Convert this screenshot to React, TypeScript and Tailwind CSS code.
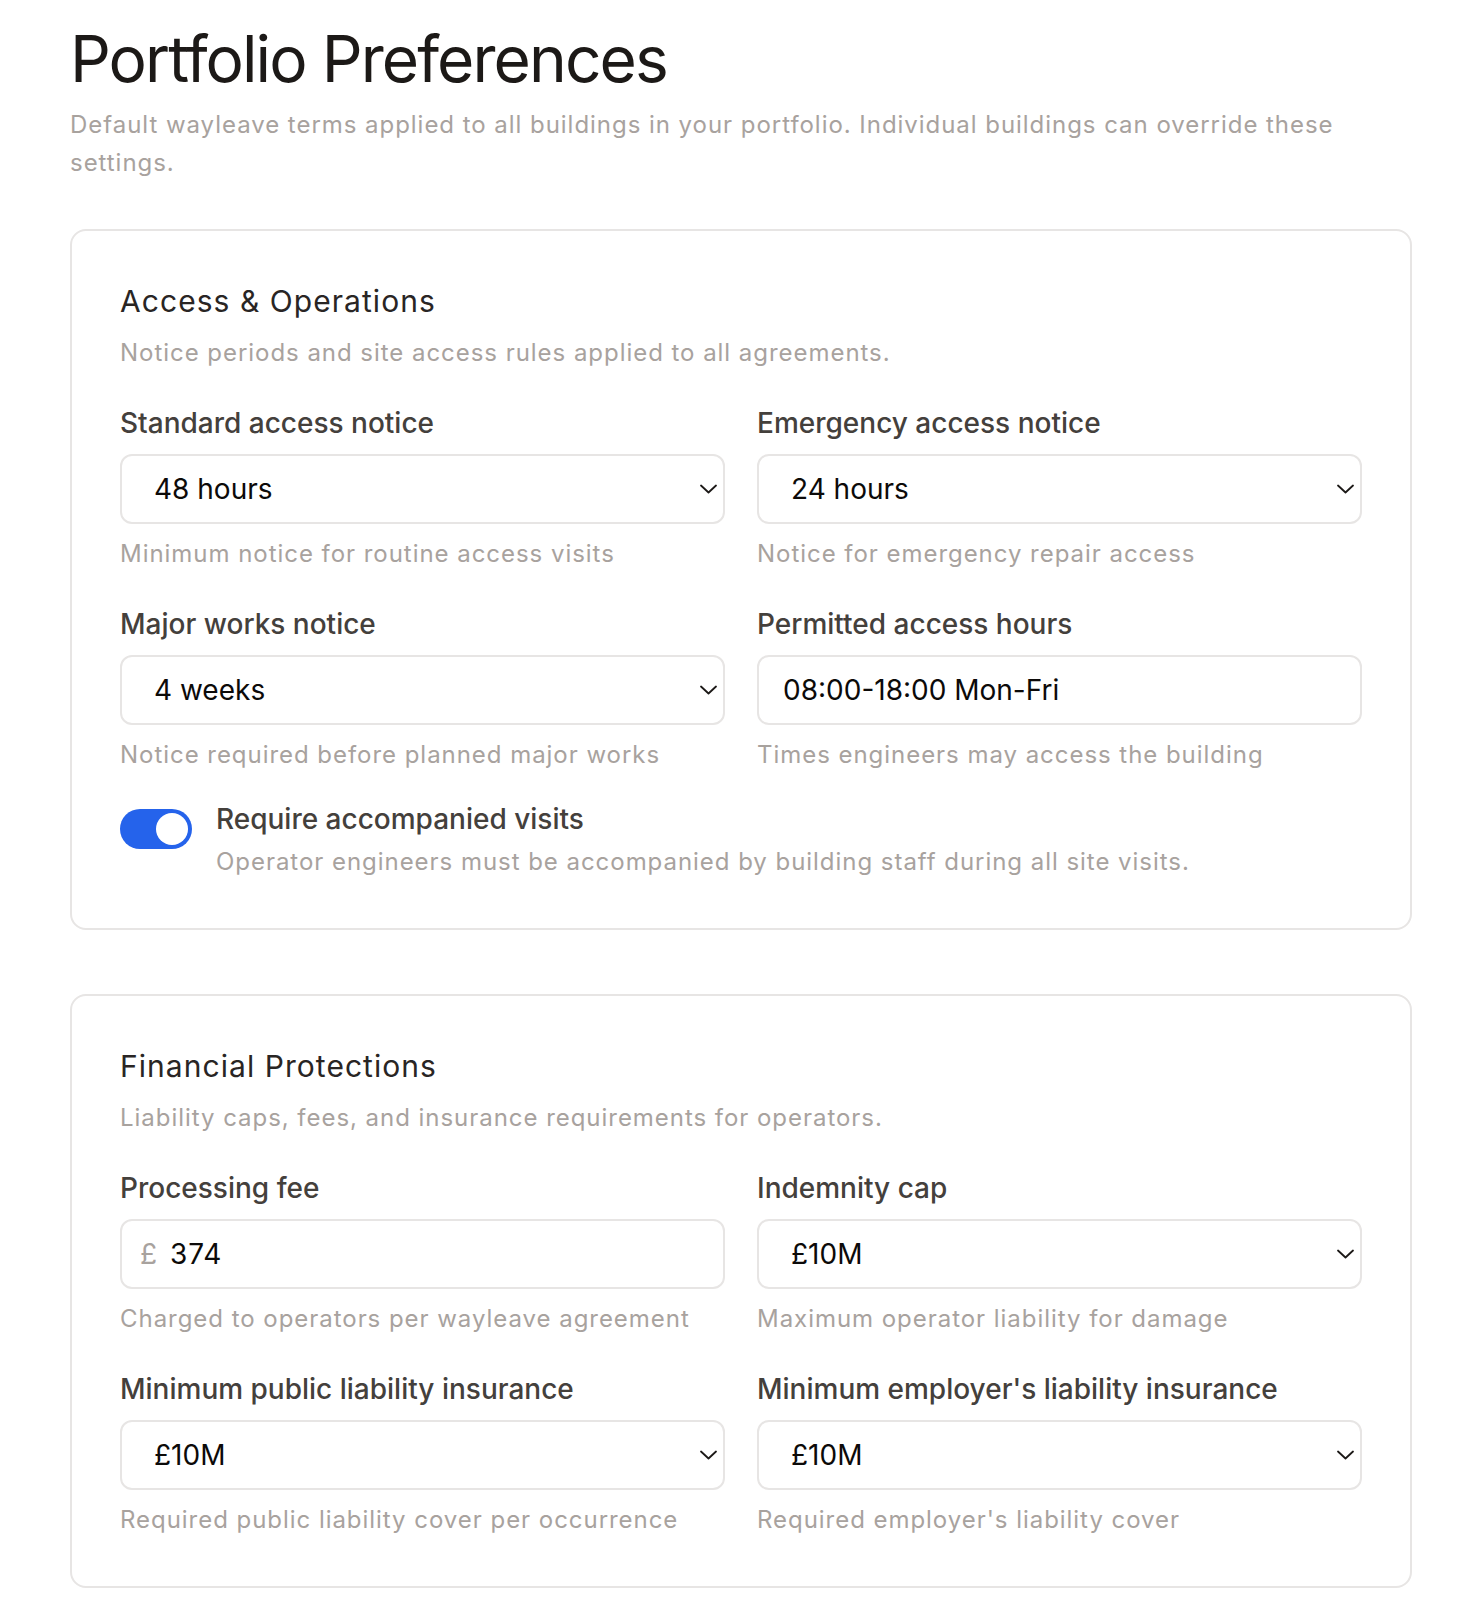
import React from 'react'

type Field = {
  label: string
  value: string
  hint: string
  kind: 'select' | 'input' | 'money'
}

const ACCESS: Field[] = [
  { label: 'Standard access notice', value: '48 hours', hint: 'Minimum notice for routine access visits', kind: 'select' },
  { label: 'Emergency access notice', value: '24 hours', hint: 'Notice for emergency repair access', kind: 'select' },
  { label: 'Major works notice', value: '4 weeks', hint: 'Notice required before planned major works', kind: 'select' },
  { label: 'Permitted access hours', value: '08:00-18:00 Mon-Fri', hint: 'Times engineers may access the building', kind: 'input' },
]

const FINANCIAL: Field[] = [
  { label: 'Processing fee', value: '374', hint: 'Charged to operators per wayleave agreement', kind: 'money' },
  { label: 'Indemnity cap', value: '£10M', hint: 'Maximum operator liability for damage', kind: 'select' },
  { label: 'Minimum public liability insurance', value: '£10M', hint: 'Required public liability cover per occurrence', kind: 'select' },
  { label: "Minimum employer's liability insurance", value: '£10M', hint: "Required employer's liability cover", kind: 'select' },
]

function Chevron() {
  return (
    <svg width="17" height="10" viewBox="0 0 17 10" fill="none" className="shrink-0">
      <polyline points="1,1.5 8.5,8.5 16,1.5" stroke="#1c1917" strokeWidth="1.8" strokeLinecap="round" strokeLinejoin="round" />
    </svg>
  )
}

function Control({ field }: { field: Field }) {
  if (field.kind === 'select') {
    return (
      <div className="mt-[9px] h-[70px] flex items-center justify-between border-2 border-[#e7e5e4] rounded-[12px] bg-white pl-8 pr-[6px]">
        <span className="text-[28px] text-[#0c0a09]">{field.value}</span>
        <Chevron />
      </div>
    )
  }
  if (field.kind === 'money') {
    return (
      <div className="mt-[9px] h-[70px] flex items-center border-2 border-[#e7e5e4] rounded-[12px] bg-white pl-[18px]">
        <span className="text-[28px] text-[#a8a29e]">£</span>
        <span className="ml-[13px] text-[28px] tracking-[0.03em] text-[#0c0a09]">{field.value}</span>
      </div>
    )
  }
  return (
    <div className="mt-[9px] h-[70px] flex items-center border-2 border-[#e7e5e4] rounded-[12px] bg-white pl-6">
      <span className="text-[28px] text-[#0c0a09]">{field.value}</span>
    </div>
  )
}

function FieldGrid({ fields }: { fields: Field[] }) {
  return (
    <div className="mt-[30px] grid grid-cols-2 gap-x-8 gap-y-[30px]">
      {fields.map((f) => (
        <div key={f.label}>
          <p className="text-[28px] leading-[44px] font-medium text-[#44403c]">{f.label}</p>
          <Control field={f} />
          <p className="mt-[11px] text-[24px] leading-[37px] tracking-[0.04em] text-[#a8a29e]">{f.hint}</p>
        </div>
      ))}
    </div>
  )
}

function Section({ title, desc, children }: { title: string; desc: string; children: React.ReactNode }) {
  return (
    <div className="border-2 border-[#e7e5e4] rounded-[16px] bg-white p-12">
      <h2 className="text-[30px] leading-[45px] tracking-[0.035em] text-[#292524]">{title}</h2>
      <p className="mt-[10px] text-[24px] leading-[37px] tracking-[0.04em] text-[#a8a29e]">{desc}</p>
      {children}
    </div>
  )
}

export default function App() {
  return (
    <div className="min-h-screen bg-white pl-[70px] pr-[64px] pt-[27px] pb-16 font-['Inter','Noto_Sans',sans-serif]">
      <h1 className="text-[64px] leading-[64px] tracking-[-0.03em] text-[#1c1917]">Portfolio Preferences</h1>
      <p className="mt-[15px] text-[24px] leading-[37.5px] tracking-[0.04em] text-[#a8a29e]">
        Default wayleave terms applied to all buildings in your portfolio. Individual buildings can override these settings.
      </p>

      <div className="mt-12">
        <Section title="Access & Operations" desc="Notice periods and site access rules applied to all agreements.">
          <FieldGrid fields={ACCESS} />
          <div className="mt-6 flex items-start gap-6">
            <div className="mt-3 h-10 w-[72px] shrink-0 rounded-full bg-[#2563eb] p-1 flex justify-end">
              <span className="h-8 w-8 rounded-full bg-white" />
            </div>
            <div>
              <p className="text-[28px] leading-[44px] font-medium text-[#44403c]">Require accompanied visits</p>
              <p className="mt-[2px] text-[24px] leading-[37px] tracking-[0.04em] text-[#a8a29e]">
                Operator engineers must be accompanied by building staff during all site visits.
              </p>
            </div>
          </div>
        </Section>
      </div>

      <div className="mt-16">
        <Section title="Financial Protections" desc="Liability caps, fees, and insurance requirements for operators.">
          <FieldGrid fields={FINANCIAL} />
        </Section>
      </div>
    </div>
  )
}
